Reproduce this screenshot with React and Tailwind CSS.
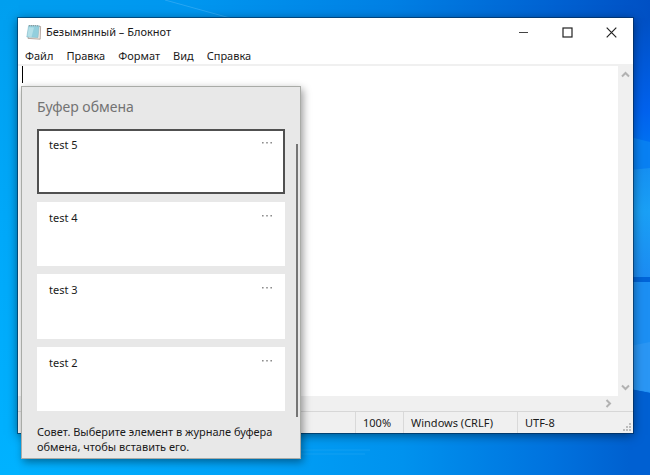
import React from "react";

const menus = ["Файл", "Правка", "Формат", "Вид", "Справка"];
const clips = ["test 5", "test 4", "test 3", "test 2"];

function Wallpaper() {
  return (
    <svg
      aria-hidden="true"
      className="absolute inset-0 h-full w-full"
      viewBox="0 0 650 475"
      preserveAspectRatio="none"
    >
      <defs>
        <linearGradient id="sky" x1="0" y1="0" x2="1" y2="0">
          <stop offset="0" stopColor="#009fef" />
          <stop offset="0.3" stopColor="#0096ef" />
          <stop offset="0.6" stopColor="#0080e4" />
          <stop offset="0.85" stopColor="#0062d2" />
          <stop offset="1" stopColor="#0050c4" />
        </linearGradient>
        <linearGradient id="floor" x1="0" y1="0" x2="1" y2="0">
          <stop offset="0" stopColor="#00b2ff" />
          <stop offset="0.4" stopColor="#00a0f6" />
          <stop offset="0.62" stopColor="#0092ee" />
          <stop offset="0.85" stopColor="#0072de" />
          <stop offset="1" stopColor="#005ccc" />
        </linearGradient>
        <linearGradient id="left" x1="0" y1="0" x2="0" y2="1">
          <stop offset="0" stopColor="#009fef" />
          <stop offset="0.5" stopColor="#00a9fa" />
          <stop offset="1" stopColor="#00b2ff" />
        </linearGradient>
        <linearGradient id="side" x1="0" y1="0" x2="0" y2="1">
          <stop offset="0" stopColor="#0050c4" />
          <stop offset="0.75" stopColor="#0062ee" />
          <stop offset="1" stopColor="#0070f2" />
        </linearGradient>
        <linearGradient id="pane" x1="0" y1="0" x2="0" y2="1">
          <stop offset="0" stopColor="#1590f2" />
          <stop offset="0.4" stopColor="#1aa0f6" />
          <stop offset="1" stopColor="#1c8cf2" />
        </linearGradient>
      </defs>
      <rect width="650" height="240" fill="url(#sky)" />
      <rect y="240" width="650" height="235" fill="url(#floor)" />
      <rect width="19" height="475" fill="url(#left)" />
      <path d="M165 0L230 18" stroke="#38adf5" strokeWidth="1" opacity="0.7" />
      <rect x="630" y="18" width="20" height="124" fill="url(#side)" />
      <path d="M630 137L650 142V172H630Z" fill="#0880f2" />
      <path d="M630 170L650 168V277H630Z" fill="url(#pane)" />
      <rect x="630" y="277" width="20" height="5" fill="#0064d8" />
      <path d="M630 282H650V393L630 389Z" fill="#1c8ff3" />
      <path d="M630 346L650 342V392L630 389Z" fill="#2a96f4" />
      <path d="M630 389L650 393V475H630Z" fill="#0060d2" />
      <path d="M300 450H370M300 454H365" stroke="#20a6f4" strokeWidth="1" opacity="0.6" />
    </svg>
  );
}

function NotepadIcon() {
  return (
    <svg aria-hidden="true" className="h-4 w-4 shrink-0" viewBox="0 0 16 16">
      <path d="M4 2L14.6 2.5L14.2 15.2L2 14.4Z" fill="#f3ebe4" stroke="#9c8a82" strokeWidth="0.7" />
      <path d="M2.6 1.6L13.2 1.8L12 13.6L0.8 13Z" fill="#93cfdd" stroke="#7fb3c0" strokeWidth="0.5" />
      <path d="M2.8 3.2L8 3.4L5.5 13L1.4 12.6Z" fill="#b4e0e8" />
      <path d="M3 1.6L13.2 1.8" stroke="#8a9a9e" strokeWidth="1.2" strokeDasharray="1 1" />
    </svg>
  );
}

function Chevron({ d, className }) {
  return (
    <svg aria-hidden="true" className={className} width="9" height="9" viewBox="0 0 9 9" fill="none">
      <path d={d} stroke="#b2b2b2" strokeWidth="2" />
    </svg>
  );
}

function TitleBar() {
  return (
    <header className="flex h-7 items-center pl-2">
      <NotepadIcon />
      <h1 className="ml-1 flex-1 text-[11px] leading-4">Безымянный – Блокнот</h1>
      <button aria-label="Свернуть" className="flex h-7 w-11 items-center justify-center">
        <svg width="11" height="11" viewBox="0 0 11 11">
          <path d="M1 5.5H10" stroke="#444" strokeWidth="1" />
        </svg>
      </button>
      <button aria-label="Развернуть" className="flex h-7 w-11 items-center justify-center">
        <svg width="11" height="11" viewBox="0 0 11 11">
          <rect x="1" y="1" width="9" height="9" fill="none" stroke="#222" strokeWidth="1.2" />
        </svg>
      </button>
      <button aria-label="Закрыть" className="flex h-7 w-11 items-center justify-center">
        <svg width="11" height="11" viewBox="0 0 11 11">
          <path d="M0.7 0.7L10.3 10.3M10.3 0.7L0.7 10.3" stroke="#222" strokeWidth="1.2" />
        </svg>
      </button>
    </header>
  );
}

function StatusBar() {
  return (
    <footer className="flex h-[22px] items-stretch border-t border-[#d7d7d7] bg-[#f0f0f0] text-[11px] leading-[22px]">
      <span className="flex-1" />
      <span className="w-12 border-l border-[#d9d9d9] pl-[7px]">100%</span>
      <span className="w-[114px] border-l border-[#d9d9d9] pl-[7px]">Windows (CRLF)</span>
      <span className="flex w-[116px] items-stretch justify-between border-l border-[#d9d9d9] pl-[7px]">
        UTF-8
        <svg aria-hidden="true" className="mr-px self-end" width="10" height="11" viewBox="0 0 10 11" fill="#bcbcbc">
          <path d="M7 1h2v2h-2zM4 4h2v2h-2zM7 4h2v2h-2zM1 7h2v2h-2zM4 7h2v2h-2zM7 7h2v2h-2z" />
        </svg>
      </span>
    </footer>
  );
}

function Clip({ text, selected }) {
  return (
    <li
      className={
        selected
          ? "flex flex-1 items-start justify-between border-2 border-[#505050] bg-white"
          : "flex flex-1 items-start justify-between border-2 border-white bg-white"
      }
    >
      <button className="flex flex-1 self-stretch pt-1.5 pl-2.5 text-left text-[11px] leading-4">
        {text}
      </button>
      <button aria-label={"Дополнительно: " + text} className="mt-1.5 mr-1.5 flex h-4 w-5 justify-center pt-1">
        <svg width="12" height="4" viewBox="0 0 12 4" fill="#8c8c8c">
          <path d="M1 1h1.6v1.6h-1.6zM5.2 1h1.6v1.6h-1.6zM9.4 1h1.6v1.6h-1.6z" />
        </svg>
      </button>
    </li>
  );
}

function ClipboardPanel() {
  return (
    <aside className="absolute top-[68px] left-[3px] w-[280px] border border-[#a9aba7] bg-[#e8e8e8] pb-1 shadow-[2px_3px_8px_rgba(0,0,0,0.4)]">
      <h2 className="px-[15px] pt-2.5 pb-3 text-[14px] leading-5 text-[#737373]">Буфер обмена</h2>
      <div className="flex">
        <ul className="ml-[15px] flex h-[282px] flex-1 flex-col gap-2">
          {clips.map((text, i) => (
            <Clip key={text} text={text} selected={i === 0} />
          ))}
        </ul>
        <div className="mt-[15px] -mb-1.5 ml-[11px] mr-0.5 w-0.5 bg-[#757575]" />
      </div>
      <p className="px-[15px] pt-[13px] text-[11px] leading-[15px]">
        Совет. Выберите элемент в журнале буфера обмена, чтобы вставить его.
      </p>
    </aside>
  );
}

export default function App() {
  return (
    <div className="relative flex h-screen flex-col overflow-hidden pt-[18px] pr-[17px] pb-[42px] pl-[18px] font-['Noto_Sans','Open_Sans',sans-serif] text-[#1a1a1a]">
      <Wallpaper />
      <main className="relative flex min-h-0 flex-1 flex-col bg-white shadow-[0_0_0_1px_rgba(0,40,80,0.6),0_2px_10px_rgba(0,0,0,0.5)]">
        <TitleBar />
        <nav className="flex h-5 items-end gap-[13px] border-b-2 border-[#f0f0f0] pl-[7px]">
          {menus.map((m) => (
            <button key={m} className="text-[11px] leading-4">
              {m}
            </button>
          ))}
        </nav>
        <div className="flex min-h-0 flex-1">
          <span aria-hidden="true" className="ml-1 h-[17px] w-px bg-black" />
          <textarea aria-label="Текст документа" className="flex-1 resize-none text-[11px] outline-none" />
          <div className="flex w-[15px] flex-col items-center justify-between bg-[#f0f0f0] py-1">
            <Chevron d="M1 6.5L4.5 3L8 6.5" />
            <Chevron d="M1 2.5L4.5 6L8 2.5" />
          </div>
        </div>
        <div className="flex h-[15px] items-center justify-end bg-[#f0f0f0]">
          <Chevron className="mr-5" d="M2.5 1L6 4.5L2.5 8" />
        </div>
        <StatusBar />
        <ClipboardPanel />
      </main>
    </div>
  );
}
